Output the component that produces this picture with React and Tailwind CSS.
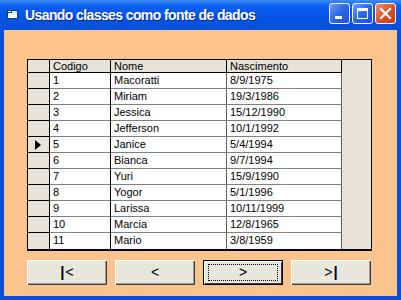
import React from 'react';

const rows = [
  ['1', 'Macoratti', '8/9/1975'],
  ['2', 'Miriam', '19/3/1986'],
  ['3', 'Jessica', '15/12/1990'],
  ['4', 'Jefferson', '10/1/1992'],
  ['5', 'Janice', '5/4/1994'],
  ['6', 'Bianca', '9/7/1994'],
  ['7', 'Yuri', '15/9/1990'],
  ['8', 'Yogor', '5/1/1996'],
  ['9', 'Larissa', '10/11/1999'],
  ['10', 'Marcia', '12/8/1965'],
  ['11', 'Mario', '3/8/1959'],
];

function TitleButton({ kind }) {
  const red = kind === 'close';
  return (
    <div
      className={
        'w-[21px] h-[21px] rounded-[3px] border border-white flex items-center justify-center ' +
        (red
          ? 'bg-[linear-gradient(135deg,#f0906a,#e0522a_50%,#c23a14)]'
          : 'bg-[linear-gradient(135deg,#6e9cf6,#2c68ea_50%,#1b4fd4)]')
      }
    >
      {kind === 'min' && <div className="w-[7px] h-[3px] bg-white mt-[8px] -ml-[2px]" />}
      {kind === 'max' && <div className="w-[11px] h-[11px] border border-white border-t-[3px]" />}
      {kind === 'close' && (
        <svg width="13" height="13" viewBox="0 0 13 13">
          <path d="M2 2 L11 11 M11 2 L2 11" stroke="white" strokeWidth="2.2" strokeLinecap="square" />
        </svg>
      )}
    </div>
  );
}

function NavButton({ children, focused }) {
  return (
    <div
      className={
        'w-[80px] h-[25px] bg-[#e9e6dc] flex items-center justify-center ' +
        (focused
          ? 'border border-black shadow-[inset_1px_1px_0_#ffffff,inset_-1px_-1px_0_#404040]'
          : 'shadow-[inset_1px_1px_0_#ffffff,inset_-1px_-1px_0_#404040,inset_-2px_-2px_0_#9a9a9a]')
      }
    >
      {focused ? (
        <div className="w-[70px] h-[17px] border border-dotted border-black flex items-center justify-center">
          {children}
        </div>
      ) : (
        children
      )}
    </div>
  );
}

export default function App() {
  return (
    <div
      className="w-[401px] h-[300px] bg-[#0a4fdc] flex flex-col overflow-hidden"
      style={{ fontFamily: '"Liberation Sans", Arial, sans-serif' }}
    >
      <div className="h-[30px] flex items-center pl-[7px] pr-[5px] bg-[linear-gradient(180deg,#3d8df5_0%,#0a5ff0_20%,#0554e6_60%,#0a4fd6_100%)]">
        <svg width="11" height="9" viewBox="0 0 11 9" className="mt-[-1px]">
          <rect x="0.5" y="0.5" width="10" height="8" fill="#bfeefa" stroke="#1b3a6a" />
          <rect x="0.5" y="0.5" width="4" height="2" fill="#ffffff" stroke="#1b3a6a" />
          <rect x="1.5" y="3" width="8" height="5" fill="#e8fcff" />
        </svg>
        <div className="ml-[7px] text-white font-bold text-[14px] tracking-[-0.6px] [text-shadow:1px_1px_0_#0a2a80]">
          Usando classes como fonte de dados
        </div>
        <div className="ml-auto flex gap-[2px] mt-[-3px]">
          <TitleButton kind="min" />
          <TitleButton kind="max" />
          <TitleButton kind="close" />
        </div>
      </div>

      <div className="flex-1 mx-[4px] mb-[4px] bg-[#fbc48c] pl-[23px] pt-[29px] flex flex-col">
        <div className="w-[345px] flex border-t border-l border-r border-black border-b-2 text-[11px] text-black">
          <div className="w-[314px] flex flex-col">
            <div className="flex h-[13px] border-b border-black bg-[#e6e3d8]">
              <div className="w-[22px] border-r border-black" />
              <div className="w-[61px] border-r border-black pl-[3px] leading-[12px]">Codigo</div>
              <div className="w-[116px] border-r border-black pl-[3px] leading-[12px]">Nome</div>
              <div className="w-[115px] border-r border-black pl-[3px] leading-[12px]">Nascimento</div>
            </div>
            {rows.map((r, i) => (
              <div key={r[0]} className="flex h-[16px]">
                <div
                  className={
                    'w-[22px] bg-[#e6e3d8] border-r border-black flex items-center pl-[7px] ' +
                    (i < rows.length - 1 ? 'border-b border-black' : '')
                  }
                >
                  {i === 4 && (
                    <svg width="6" height="10" viewBox="0 0 6 10">
                      <path d="M0 0 L6 5 L0 10 Z" fill="black" />
                    </svg>
                  )}
                </div>
                <div
                  className={
                    'w-[61px] bg-white border-r border-black pl-[3px] leading-[15px] ' +
                    (i < rows.length - 1 ? 'border-b border-b-[#808080]' : '')
                  }
                >
                  {r[0]}
                </div>
                <div
                  className={
                    'w-[116px] bg-white border-r border-[#606060] pl-[3px] leading-[15px] ' +
                    (i < rows.length - 1 ? 'border-b border-b-[#808080]' : '')
                  }
                >
                  {r[1]}
                </div>
                <div
                  className={
                    'w-[115px] bg-white border-r border-[#606060] pl-[3px] leading-[15px] ' +
                    (i < rows.length - 1 ? 'border-b border-b-[#808080]' : '')
                  }
                >
                  {r[2]}
                </div>
              </div>
            ))}
          </div>
          <div className="flex-1 bg-[#e6e3d8]" />
        </div>

        <div className="flex gap-[8px] mt-[9px] text-[14px] text-black">
          <NavButton>
            <span className="font-bold text-[15px] mr-[1px]">|</span>&lt;
          </NavButton>
          <NavButton>&lt;</NavButton>
          <NavButton focused>&gt;</NavButton>
          <NavButton>
            &gt;<span className="font-bold text-[15px] ml-[1px]">|</span>
          </NavButton>
        </div>
      </div>
    </div>
  );
}
